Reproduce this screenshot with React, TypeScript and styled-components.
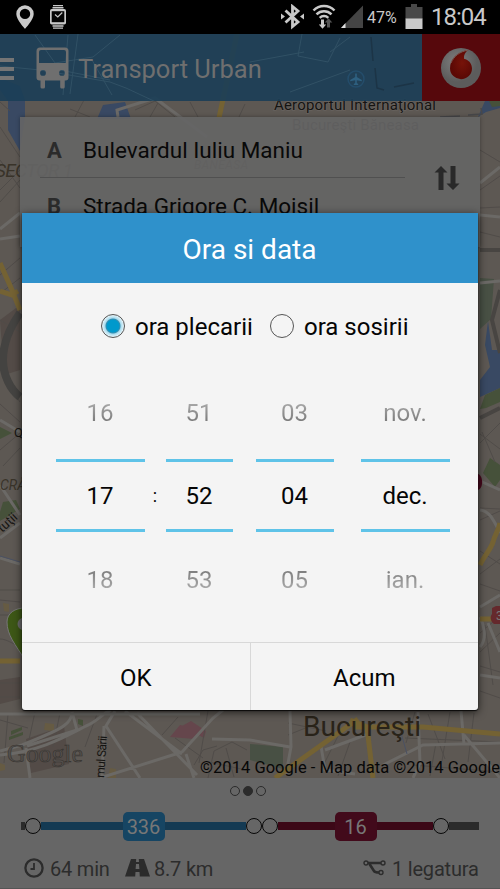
import type { ReactNode } from "react";
import styled, { createGlobalStyle } from "styled-components";

const wheels = [
  { values: ["16", "17", "18"], width: 89, gap: 0 },
  { values: ["51", "52", "53"], width: 67, gap: 0 },
  { values: ["03", "04", "05"], width: 78, gap: 23 },
  { values: ["nov.", "dec.", "ian."], width: 89, gap: 27 },
];

export default function App() {
  return (
    <>
      <GlobalStyle />
      <Screen>
        <StatusBar>
          <StatusGroup>
            <PlaceIcon />
            <WatchIcon />
          </StatusGroup>
          <StatusGroup>
            <SignalIcons />
            <BatteryText>47%</BatteryText>
            <BatteryIcon />
            <Clock>18:04</Clock>
          </StatusGroup>
        </StatusBar>
        <Stage>
          <CityMap />
          <AppBar>
            <Burger>
              <i />
              <i />
              <i />
            </Burger>
            <BusIcon />
            <AppTitle>Transport Urban</AppTitle>
            <Operator>
              <OperatorLogo />
            </Operator>
          </AppBar>
          <RouteCard>
            <Stops>
              <StopRow letter="A">Bulevardul Iuliu Maniu</StopRow>
              <StopRow letter="B">Strada Grigore C. Moisil</StopRow>
            </Stops>
            <SwapIcon />
          </RouteCard>
        </Stage>
        <Itinerary>
          <Pager>
            <PageDot />
            <PageDot $active />
            <PageDot />
          </Pager>
          <Track>
            <Segment $color="#2b2b2b" $width={4} />
            <Stop />
            <Segment $color="#143a53">
              <LineBadge $color="#164563">336</LineBadge>
            </Segment>
            <Stop />
            <Stop />
            <Segment $color="#3c0817" $width={155}>
              <LineBadge $color="#420a1b">16</LineBadge>
            </Segment>
            <Stop />
            <Segment $color="#2b2b2b" $width={30} />
          </Track>
          <Summary>
            <ClockIcon />
            <Metric $left={6} $width={59}>64 min</Metric>
            <RoadIcon />
            <Metric $left={4} $width={58}>8.7 km</Metric>
            <Spacer />
            <LinkIcon />
            <Metric $left={6} $width={87}>1 legatura</Metric>
          </Summary>
        </Itinerary>
        <Dialog>
          <DialogTitle>Ora si data</DialogTitle>
          <DialogBody>
            <RadioRow>
              <Radio $checked />
              <RadioLabel $width={128}>ora plecarii</RadioLabel>
              <Radio />
              <RadioLabel>ora sosirii</RadioLabel>
            </RadioRow>
            <Wheels>
              {wheels.map(({ values, width, gap }, i) => (
                <WheelGroup key={values[1]}>
                  {i === 1 && <Colon>:</Colon>}
                  <Wheel $width={width} $gap={gap}>
                    <Ghost>{values[0]}</Ghost>
                    <Current>{values[1]}</Current>
                    <Ghost $below>{values[2]}</Ghost>
                  </Wheel>
                </WheelGroup>
              ))}
            </Wheels>
          </DialogBody>
          <Actions>
            <Action>OK</Action>
            <Action>Acum</Action>
          </Actions>
        </Dialog>
      </Screen>
    </>
  );
}

function StopRow({ letter, children }: { letter: string; children: ReactNode }) {
  return (
    <StopLine>
      <StopLetter>{letter}</StopLetter>
      <span>{children}</span>
    </StopLine>
  );
}

function PlaceIcon() {
  return (
    <svg width="18" height="24" viewBox="0 0 18 24">
      <path
        fill="#c9c9c9"
        fillRule="evenodd"
        d="M9 .3a8.7 8.7 0 0 0-8.700 8.600C.3 14.800 9 23.700 9 23.700s8.700-8.900 8.700-14.800A8.700 8.700 0 0 0 9 .3zm0 3.400a5.200 5.200 0 1 1 0 10.400A5.200 5.200 0 0 1 9 3.700z"
      />
    </svg>
  );
}

function WatchIcon() {
  return (
    <svg width="16" height="24" viewBox="0 0 16 24">
      <path fill="#c9c9c9" d="M3 0h10v1.300H3zM2.500 2h11v1.500h-11zM2.500 20.300h11v1.500h-11zM3 22.500h10v1.300H3z" />
      <rect x="0" y="4" width="16" height="15.500" rx="1.800" fill="#c9c9c9" />
      <rect x="1.700" y="6.200" width="12.600" height="11" fill="#050505" />
      <path d="M5 9.500l2.800 2.500 4.500-4.500" fill="none" stroke="#c9c9c9" strokeWidth="1.200" />
    </svg>
  );
}

function SignalIcons() {
  return (
    <svg width="84" height="26" viewBox="281 4 84 26">
      <g fill="none" stroke="#c9c9c9">
        <path strokeWidth="2.800" d="M286.500 10.500l12.500 11.500-5.500 4.500V6.500l5.500 4.500-12.500 11.500" />
        <path strokeWidth="2.500" d="M314.500 10.500a14.700 14.700 0 0 1 21 0M317.500 14.300a10.600 10.600 0 0 1 15 0M320.700 17.800a6.200 6.200 0 0 1 8.600 0" />
      </g>
      <path fill="#c9c9c9" d="M282 13.500l4 3-4 3zM305 13.500l-4 3 4 3zM322 19.500h3v5h2.200l-3.700 4.300-3.700-4.300h2.200z" />
      <path fill="#555" d="M328 27.500h3v-5h2.300l-3.800-4.200-3.700 4.200h2.200z" />
      <path fill="#444" d="M364 5.500v22.400h-22z" />
      <path fill="#e0e0e0" d="M346.500 23v5H342z" />
    </svg>
  );
}

function BatteryIcon() {
  return (
    <svg width="18" height="26" viewBox="0 0 18 26">
      <path fill="#484848" d="M6 0h6v3h5.500v12H.5V3H6z" />
      <path fill="#cacaca" d="M.5 14.500h17V25H.5z" />
    </svg>
  );
}

function BusIcon() {
  return (
    <BusSvg width="33" height="42" viewBox="0 0 33 42">
      <path
        fill="#6f6f6f"
        fillRule="evenodd"
        d="M4 .5h25a3.500 3.500 0 0 1 3.500 3.500v26.500a3 3 0 0 1-3 3h-.8V40a1.500 1.500 0 0 1-1.500 1.500h-1.500a1.500 1.500 0 0 1-1.500-1.500v-6.500H9V40a1.500 1.500 0 0 1-1.500 1.500H6A1.500 1.500 0 0 1 4.500 40v-6.500h-1a3 3 0 0 1-3-3V4A3.500 3.500 0 0 1 4 .5zM5 3a2 2 0 0 0-2 2v11h27V5a2 2 0 0 0-2-2zM7 23a2.900 2.900 0 1 0 0 5.800A2.900 2.900 0 0 0 7 23zm19 0a2.900 2.900 0 1 0 0 5.800 2.900 2.900 0 0 0 0-5.800z"
      />
    </BusSvg>
  );
}

function OperatorLogo() {
  return (
    <svg width="42" height="42" viewBox="0 0 42 42">
      <defs>
        <radialGradient id="silver" cx="40%" cy="35%">
          <stop offset="0" stopColor="#808080" />
          <stop offset="1" stopColor="#5c5c5c" />
        </radialGradient>
        <radialGradient id="drop" cx="55%" cy="45%">
          <stop offset="0" stopColor="#771309" />
          <stop offset="1" stopColor="#5c0905" />
        </radialGradient>
      </defs>
      <circle cx="21" cy="21" r="20" fill="url(#silver)" />
      <path fill="url(#drop)" d="M28.500 3C18 4 10 11.500 10 21.500a11 11 0 0 0 11 10.700c6.300 0 11-4.800 11-10.700 0-5-3.500-8.700-8-9.700-.4-3.800 1.200-7 4.500-8.800z" />
      <path fill="none" stroke="#7b5851" strokeWidth="1" d="M11 16C14 9 20 4.500 28 3.200" />
    </svg>
  );
}

function SwapIcon() {
  return (
    <SwapSvg width="26" height="26" viewBox="0 0 26 26">
      <path fill="#292929" d="M7 1L.5 7.500h4V25h5V7.500h4zM19 25l6.500-6.500h-4V1h-5v17.500h-4z" />
    </SwapSvg>
  );
}

function ClockIcon() {
  return (
    <svg width="20" height="20" viewBox="0 0 20 20" fill="none" stroke="#2c2c2c">
      <circle cx="10" cy="10" r="8.600" strokeWidth="2.300" />
      <path d="M10 5v6H6.500" strokeWidth="1.800" />
    </svg>
  );
}

function RoadIcon() {
  return (
    <RoadSvg width="25" height="18" viewBox="0 0 25 18">
      <path fill="#2b2b2b" fillRule="evenodd" d="M6 0h5.200L11 3h3l-.2-3H19l6 17.500H14.800l-.3-4.500h-4l-.3 4.500H0zM11 5l-.4 5h3.800L14 5z" />
    </RoadSvg>
  );
}

function LinkIcon() {
  return (
    <LinkSvg width="23" height="16" viewBox="0 0 23 16" fill="none" stroke="#2c2c2c" strokeWidth="1.400">
      <circle cx="3" cy="3" r="2" />
      <circle cx="20" cy="3" r="2" />
      <circle cx="18" cy="12.500" r="2" />
      <path strokeWidth="2.600" d="M5 3h13M6.500 4l4.500 7c.8 1.200 2 1.500 5 1.500" />
    </LinkSvg>
  );
}

// streets around the centre, in screen coordinates
function CityMap() {
  return (
    <MapSvg width="500" height="744" viewBox="0 34 500 744">
      <rect y="34" width="500" height="744" fill="#5d5853" />
      <g fill="#394963">
        <path d="M0 78l20 8 5 14v17l-5 34-12-21V101L0 90zM97 119l6-14 22-3 6 17zM478 117l7-16h15v7l-14 4zM488 321l-3 24 5 22-10 13v17l20-9v-38h-8z" />
      </g>
      <g fill="#46513a">
        <path d="M489 101h11v5l-8 1zM485 395l15-7v14l-14 6-6 1zM483 473l7-15 10 7v15l-5 7zM0 427l12 6-12 6zM0 512l3-10 13-2 4 9-20 12zM11 731l11-4v3l-11 5zM9 737l14-5v3l-14 5zM78 719l5 1v6l-5-2z" />
        <path fill="#485044" d="M250 744l33 3v22l-33-9zM480 278l14 1-3 40-11 10z" />
      </g>
      <path fill="#534b47" d="M26 739l38-13 5 38-38 9zM0 320l20-15v65L4 375zM0 680l20-3v22L0 704z" />
      <path fill="#65464c" d="M170 737l10-12 23 5-8 9zM182 726l9-5 15 10-2 7z" />
      <g fill="#665b43">
        <path d="M45 723l9 1v7l-10-1zM110 768l6 1v9h-8zM0 763l5 2v5l-5 1zM12 625l8 1v12h-9zM3 603l6 1v8l-5-1z" />
      </g>
      <g fill="none" stroke="#504c49" strokeWidth="1">
        <path d="M0 102l10 9M0 127l20 30M0 160l20 28M0 190l20-20M0 202l20-22M75 117l9-17M70 109l20 8M135 110l20-9 20 16M150 117l8-14M190 102l8 15M245 104l-6 13M0 275l20-17M2 292l18-14M0 320l20 12M4 378l16 24M0 404l20 18M0 450l20-17M3 466l17-18M0 590h20M0 600l20 2M0 615h20M0 639c7 0 12 5 20 7M0 683h20M0 697h20" />
        <path d="M480 150l20 12M480 190l20-14M480 208l20-1M480 232l20 5M480 434l20 15M480 443l20-20M482 432l13 30M480 508l20 1M480 520l20-9M480 551l20 13M480 574l20-15M480 584l20 7M480 633l20-17M480 652l20-19M480 666l20 6M480 691l20 7M485 625l8 60" />
        <path d="M0 720l28 8M35 712l-8 37M8 714l-4 49M60 713l-7 34M97 714l-12 33M162 735l16-18M208 711l-9 52M175 738l28 20M194 765l9-15 14-4M208 778l6-27 18-9 15 8M209 762l37 8M226 748l8 29M415 712l-9 31M428 714l17 45M450 712l-8 49M474 713l-6 49M405 738l95 4M413 765l87 7M430 776l6-33M288 723l38 8M288 735l30-12M321 770l17-34M350 742l-12 34" />
      </g>
      <g fill="none" stroke="#484542" strokeWidth="4">
        <path d="M480 250h20M500 290l-8 30 8 33M480 418l20-10" />
        <path d="M20 313C8 330 3 344 3 360s8 30 17 37" strokeWidth="8" stroke="#444341" />
      </g>
      <g fill="none" stroke="#6b6966" strokeWidth="3">
        <path d="M0 229l20-16M0 239l20-3M0 420l20 12M0 485l20 30M0 538l20-15M0 558l20 6M0 714h200M72 712l5 18-50 16M72 712c-1 12-7 16-50 33L0 751M26 748l4 30M0 755c40-3 68-20 86-29 12-5 18-14 25-16M115 711l-9 15 34 52M104 726l-2 52M125 711l57 43M137 713l60 62M182 752l31-34 10-8M182 752l-82 26M186 754l8 24M212 739l38 1 40 7M290 711l1 36-5 27M321 746l4 24 30 4M325 750l43-16M383 765l40-20 77-2M418 712l2 51-7 15M461 711l3 33M464 735l36 43M118 117l-1-7 38-12 52 39M480 183l20-16M480 215l20 2M480 283l20-2M480 481l20 9M480 510c10 1 14 11 20 23M480 607l20-12M480 647c8-9 3-24 0-30M488 623l12 29M480 675l20 3" />
        <path stroke="#4a5163" strokeWidth="1" d="M0 556l20 6M398 722l9 32" />
      </g>
      <g fill="none" stroke="#746233" strokeWidth="5">
        <path d="M237 34l-18 84M0 263l12 27 8 20M0 291l12 4 6-4M0 661h20M480 565c4-9 11-16 13-23 2-8 5-10 7-19M480 619h13M275 778l83-59M350 720l17 7 6 51M354 727h69l77 7" />
      </g>
      <path d="M7 622c0-9 8-14 18-14v52C15 644 7 635 7 622z" fill="#3d5716" stroke="#777" />
      <path d="M22 618c-6 2-6 10 0 12z" fill="#6b6b6b" />
      <path d="M478 474c5 1 6 14 0 16z" fill="#47091c" />
      <path d="M492 608l4-2h4v18h-6c-4-3-4-8-2-10z" fill="#65292c" />
      <path fill="none" stroke="#48484a" strokeWidth="1.500" d="M440 117l20-1M468 115l14-1-1-6" />
      <g fontFamily="Roboto, sans-serif" fill="#151412">
        <text x="274" y="109.500" fontSize="15" textLength="162" stroke="#68635f" strokeWidth="1.500" paintOrder="stroke">Aeroportul Internaţional</text>
        <text x="292" y="130" fontSize="15" textLength="127">Bucureşti Băneasa</text>
        <text x="194" y="169" fontSize="12" fontStyle="italic" fill="#393329" textLength="54">BANEASA</text>
        <text x="-5" y="177" fontSize="19" fontStyle="italic" fill="#393329" textLength="78">SECTOR 1</text>
        <text x="14" y="437" fontSize="13">Q</text>
        <text x="0" y="490" fontSize="14" fontStyle="italic" fill="#393329">CRÂ</text>
        <text transform="translate(2 533) rotate(-42)" fontSize="13">tuţii</text>
        <text transform="translate(104 778) rotate(-86)" fontSize="12" textLength="42">mul Sării</text>
        <text x="303" y="736" fontSize="28" fill="#292319" textLength="118" lengthAdjust="spacingAndGlyphs">Bucureşti</text>
        <text x="200" y="773" fontSize="16.500" fill="#070707" textLength="300">©2014 Google - Map data ©2014 Google</text>
        <text x="496" y="620" fontSize="12" fill="#777">3</text>
      </g>
      <text x="7" y="762" fontFamily="'Liberation Serif', serif" fontSize="26" fill="#54504d" stroke="#36332f" strokeWidth=".6" textLength="76" lengthAdjust="spacingAndGlyphs">Google</text>
    </MapSvg>
  );
}

function FaintStreets() {
  return (
    <FaintSvg width="500" height="67" viewBox="0 34 500 67" fill="none" stroke="#315165">
      <path d="M0 66l40 4 70 12 16 6 30 14M35 35l20 28 38-6 27-22M68 35l-5 60M78 34l-8 60M60 70l50 10M92 60l20 35M302 34l-4 22 30 6 12-24M330 52l20-15M250 62l54-10M290 92l60-22" />
      <path strokeWidth="1.500" stroke="#1c3446" d="M371 37l2 24M375 68l2 20 7 2M394 87l20-4" />
      <circle cx="356" cy="79" r="8" stroke="#244d6b" strokeWidth="1.500" />
      <path stroke="none" fill="#2e6080" d="M355.200 74q.8-1.500 1.600 0v3l5 3v1.300l-5-1v2.700l1.400 1v1h-4.400v-1l1.400-1v-2.700l-5 1V80l5-3z" />
    </FaintSvg>
  );
}

const GlobalStyle = createGlobalStyle`
  * {
    box-sizing: border-box;
  }

  body {
    margin: 0;
    background: #000;
    font-family: Roboto, sans-serif;
  }

  svg {
    display: block;
    flex-shrink: 0;
  }
`;

const Screen = styled.div`
  position: relative;
  display: flex;
  flex-direction: column;
  width: 500px;
  height: 889px;
  overflow: hidden;
`;

const StatusBar = styled.div`
  display: flex;
  justify-content: space-between;
  height: 34px;
  padding: 0 14px 0 16px;
  background: #000;
  color: #c9c9c9;
`;

const StatusGroup = styled.div`
  display: flex;
  align-items: center;
  white-space: nowrap;

  & > svg + svg {
    margin-left: 16px;
  }
`;

const BatteryText = styled.span`
  width: 41px;
  padding: 1px 0 0 3px;
  font-size: 16px;
`;

const Clock = styled.span`
  width: 63px;
  padding-left: 8px;
  font-size: 24px;
  letter-spacing: -1px;
`;

const Stage = styled.div`
  position: relative;
  height: 744px;
`;

const MapSvg = styled.svg`
  position: absolute;
  inset: 0;
`;

const FaintSvg = styled.svg`
  position: absolute;
  inset: 0;
  z-index: -1;
`;

const AppBarRoot = styled.div`
  position: relative;
  z-index: 0;
  display: flex;
  align-items: center;
  height: 67px;
  background: rgba(27, 62, 86, 0.9);
`;

function AppBar({ children }: { children: ReactNode }) {
  return (
    <AppBarRoot>
      <FaintStreets />
      {children}
    </AppBarRoot>
  );
}

const Burger = styled.div`
  display: flex;
  flex-direction: column;
  gap: 5px;
  width: 14px;
  padding-top: 2px;

  i {
    height: 4px;
    background: #757575;
  }
`;

const BusSvg = styled.svg`
  margin-left: 22px;
`;

const AppTitle = styled.div`
  flex: 1;
  padding: 2px 0 0 9px;
  color: #6f6f6f;
  font-size: 25.500px;
  white-space: nowrap;
`;

const Operator = styled.div`
  display: flex;
  justify-content: center;
  align-items: center;
  width: 78px;
  height: 67px;
  background: #56080c;
`;

const RouteCard = styled.div`
  position: relative;
  display: flex;
  width: 460px;
  height: 130px;
  margin: 16px 0 0 20px;
  background: rgba(101, 101, 101, 0.92);
  box-shadow: 0 0 4px rgba(0, 0, 0, 0.35);
`;

const Stops = styled.div`
  width: 385px;
  padding: 5px 0 0 20px;
`;

const StopLine = styled.div`
  display: flex;
  align-items: center;
  height: 56px;
  padding-top: 1px;
  border-bottom: 1px solid #505050;
  color: #090909;
  font-size: 22.500px;
  white-space: nowrap;
`;

const StopLetter = styled.b`
  width: 43px;
  padding: 1px 0 0 7px;
  color: #2b2b2b;
  font-size: 22px;
`;

const SwapSvg = styled.svg`
  margin: 48px 0 0 29px;
`;

const Itinerary = styled.div`
  height: 111px;
  background: #666;
  border-bottom: 1px solid #555;
`;

const Pager = styled.div`
  display: flex;
  justify-content: center;
  gap: 3px;
  padding: 8px 4px 0 0;
`;

const PageDot = styled.span<{ $active?: boolean }>`
  width: 10px;
  height: 10px;
  border: 1px solid #2b2b2b;
  border-radius: 50%;
  background: ${({ $active }) => ($active ? "#2b2b2b" : "transparent")};
`;

const Track = styled.div`
  display: flex;
  align-items: center;
  height: 30px;
  margin: 15px 21px 0;
`;

const Segment = styled.div<{ $color: string; $width?: number }>`
  display: flex;
  justify-content: center;
  align-items: center;
  flex: ${({ $width }) => ($width ? `0 0 ${$width}px` : "1")};
  height: 8px;
  background: ${({ $color }) => $color};
`;

const LineBadge = styled.span<{ $color: string }>`
  width: 42px;
  height: 29px;
  border-radius: 5px;
  background: ${({ $color }) => $color};
  color: #777;
  font-size: 20px;
  line-height: 30px;
  text-align: center;
`;

const Stop = styled.span`
  width: 16px;
  height: 16px;
  border: 1px solid #080808;
  border-radius: 50%;
  background: #666;
`;

const Summary = styled.div`
  display: flex;
  align-items: center;
  height: 30px;
  margin: 12px 21px 0 24px;
  color: #2c2c2c;
  white-space: nowrap;
`;

const Metric = styled.span<{ $left: number; $width: number }>`
  width: ${({ $width }) => $width}px;
  margin-left: ${({ $left }) => $left}px;
  padding-top: 1px;
  font-size: 20px;
  letter-spacing: -0.2px;
`;

const RoadSvg = styled.svg`
  margin-left: 16px;
`;

const LinkSvg = styled.svg`
  margin-top: -1px;
`;

const Spacer = styled.div`
  flex: 1;
`;

const Dialog = styled.div`
  position: absolute;
  top: 213px;
  left: 22px;
  display: flex;
  flex-direction: column;
  width: 456px;
  height: 497px;
  overflow: hidden;
  border-radius: 0 0 3px 3px;
  background: #f4f4f4;
  color: #050505;
  font-size: 24px;
  box-shadow: 0 1px 1px rgba(0, 0, 0, 0.8), 0 2px 8px rgba(0, 0, 0, 0.7);
`;

const DialogTitle = styled.div`
  height: 70px;
  padding-right: 1px;
  background: #2f91cb;
  color: #fff;
  font-size: 28px;
  line-height: 73px;
  text-align: center;
`;

const DialogBody = styled.div`
  height: 359px;
`;

const RadioRow = styled.div`
  display: flex;
  align-items: center;
  height: 87px;
  padding-left: 79px;
  white-space: nowrap;
`;

const Radio = styled.span<{ $checked?: boolean }>`
  width: 24px;
  height: 24px;
  margin-top: -2px;
  border: 1px solid #555;
  border-radius: 50%;
  background: ${({ $checked }) =>
    $checked
      ? "radial-gradient(circle, #0099cc 6px, #3a8fb0 7px, #a8dcef 8px, #eaf5f9 11px)"
      : "#f4f4f4"};
`;

const RadioLabel = styled.span<{ $width?: number }>`
  width: ${({ $width }) => ($width ? `${$width + 17}px` : "auto")};
  padding: 1px 0 0 10px;
`;

const Wheels = styled.div`
  display: flex;
  padding-left: 33.5px;
`;

const WheelGroup = styled.div`
  display: flex;
  align-items: center;
`;

const Colon = styled.span`
  width: 21px;
  font-size: 18px;
  text-align: center;
`;

const Wheel = styled.div<{ $width: number; $gap: number }>`
  display: flex;
  flex-direction: column;
  align-items: stretch;
  width: ${({ $width }) => $width}px;
  margin-left: ${({ $gap }) => $gap}px;
  text-align: center;
`;

const Ghost = styled.div<{ $below?: boolean }>`
  height: 89px;
  color: transparent;
  background: linear-gradient(
    ${({ $below }) => ($below ? "to top" : "to bottom")},
    #ccc 20%,
    #777 60%
  );
  background-clip: text;
  line-height: ${({ $below }) => ($below ? 97 : 86)}px;
`;

const Current = styled.div`
  height: 73px;
  border: solid #5fc3e8;
  border-width: 3px 0;
  line-height: 69px;
`;

const Actions = styled.div`
  display: flex;
  height: 68px;
  border-top: 1px solid #d8d8d8;
`;

const Action = styled.button`
  flex: 1;
  padding: 3px 0 0;
  border: 0;
  background: transparent;
  color: #050505;
  font: 24px Roboto, sans-serif;

  & + & {
    border-left: 1px solid #d8d8d8;
  }
`;
